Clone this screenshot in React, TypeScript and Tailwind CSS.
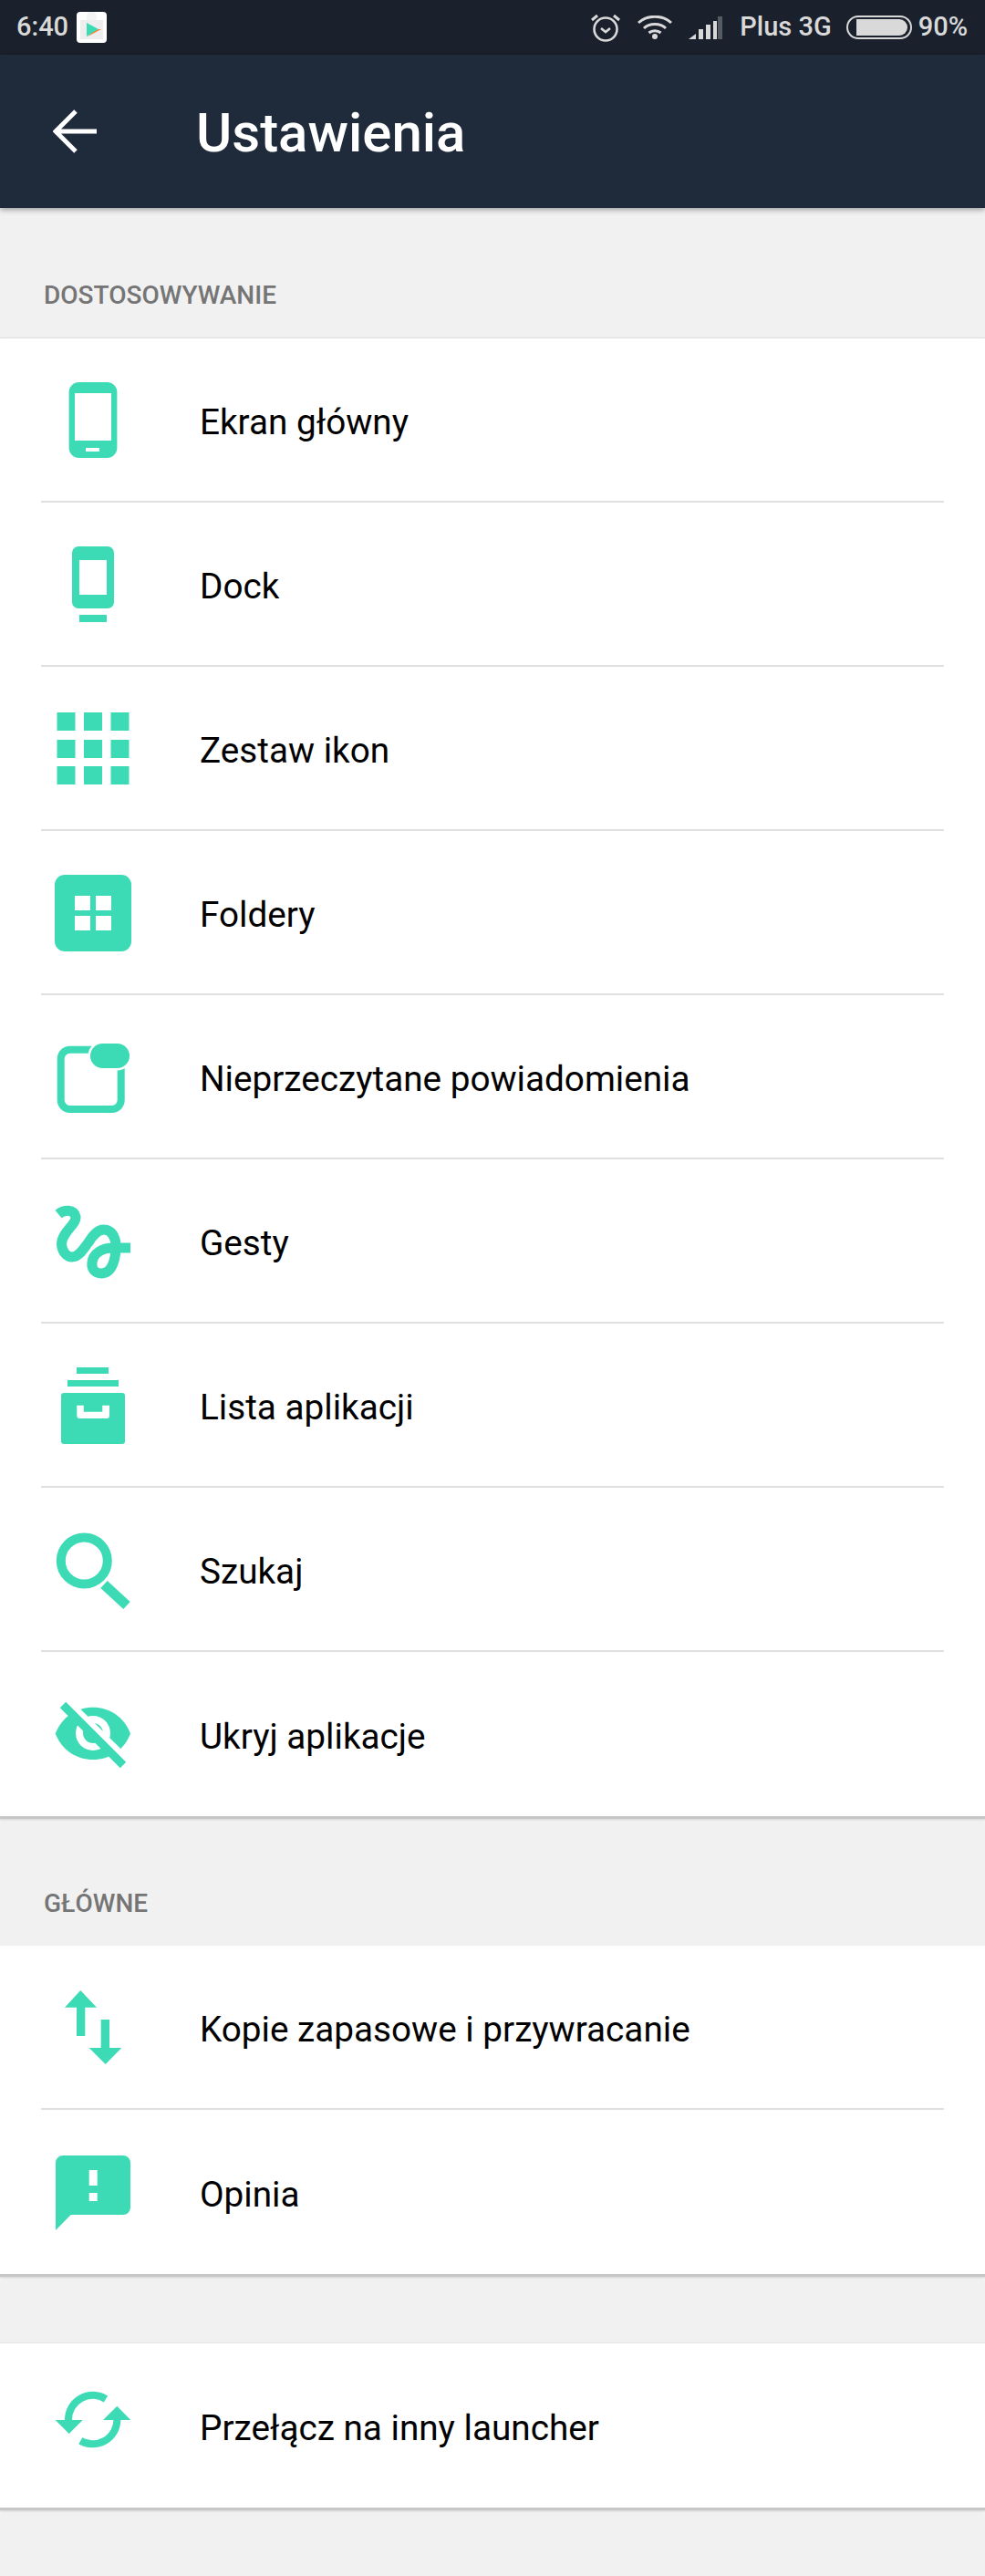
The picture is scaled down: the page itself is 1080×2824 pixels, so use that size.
import type { ReactNode } from "react";

const TEAL = "#3cdbb6";

const Icon = ({ children }: { children: ReactNode }) => (
  <svg width="96" height="96" viewBox="0 0 96 96" className="shrink-0" fill={TEAL}>
    {children}
  </svg>
);

const PhoneIcon = () => (
  <Icon>
    <rect x="21.6" y="7" width="52.8" height="83" rx="11" />
    <rect x="28" y="19" width="40" height="52" fill="#fff" />
    <rect x="40" y="79" width="15" height="4" fill="#fff" />
  </Icon>
);

const DockIcon = () => (
  <Icon>
    <rect x="25" y="7" width="46" height="68" rx="7" />
    <rect x="33" y="22" width="30" height="38" fill="#fff" />
    <rect x="33" y="82" width="30" height="8" />
  </Icon>
);

const GridIcon = () => (
  <Icon>
    {[8.5, 38, 67.5].flatMap((x) =>
      [9, 39, 68].map((y) => <rect key={`${x}-${y}`} x={x} y={y} width="20" height="20" />),
    )}
  </Icon>
);

const FolderIcon = () => (
  <Icon>
    <rect x="6" y="7" width="84" height="84" rx="11" />
    <rect x="28" y="30" width="17" height="16" fill="#fff" />
    <rect x="51" y="30" width="17" height="16" fill="#fff" />
    <rect x="28" y="52" width="17" height="16" fill="#fff" />
    <rect x="51" y="52" width="17" height="16" fill="#fff" />
  </Icon>
);

const BadgeIcon = () => (
  <Icon>
    <rect x="12.7" y="18.7" width="66" height="65.3" rx="10" fill="none" stroke={TEAL} strokeWidth="8" />
    <rect x="45" y="12" width="43" height="27" rx="13.5" stroke="#fff" strokeWidth="5" paintOrder="stroke" />
  </Icon>
);

const GestureIcon = () => (
  <Icon>
    <path
      d="M10 19C16 14 27 13 29 22C30 30 13 40 13.5 52C14 60 19 66 25 66C33 66 38 56 43 50C48 42 53 36 60 36C68 36 73 44 73 54C73 66 70 84 57 84C50 84 46 79 47 72C48 62 58 56 70 56L89 56"
      fill="none"
      stroke={TEAL}
      strokeWidth="11"
    />
  </Icon>
);

const ArchiveIcon = () => (
  <Icon>
    <rect x="30" y="7" width="35" height="7" />
    <rect x="20" y="21" width="56" height="7" />
    <rect x="13" y="35" width="70" height="56" rx="3" />
    <path d="M30.3 48.7H37.7V55.7H58.3V48.7H66V60A3 3 0 0 1 63 63H33.3A3 3 0 0 1 30.3 60Z" fill="#fff" />
  </Icon>
);

const SearchIcon = () => (
  <Icon>
    <circle cx="38.3" cy="39" r="25.5" fill="none" stroke={TEAL} strokeWidth="10" />
    <path d="M60 65L85 88" stroke={TEAL} strokeWidth="11" />
  </Icon>
);

const EyeOffIcon = () => (
  <Icon>
    <path d="M6.7 47.5C14 29 30 18.7 48 18.7C66 18.7 82 29 89 47.5C82 66 66 76 48 76C30 76 14 66 6.7 47.5Z" />
    <circle cx="48" cy="47" r="19" fill="#fff" />
    <circle cx="48" cy="47" r="11" />
    <path d="M18 11L85 77" stroke="#fff" strokeWidth="9" />
    <path d="M15 16L81 82" stroke={TEAL} strokeWidth="9" />
  </Icon>
);

const TransferIcon = () => (
  <Icon>
    <path d="M34.3 8L52 26.7H39.3V58H30V26.7H17Z" />
    <path d="M56.7 40H66V71H79.3L61.7 89L43.7 71H56.7Z" />
  </Icon>
);

const FeedbackIcon = () => (
  <Icon>
    <path d="M15 8H81A8 8 0 0 1 89 16V65A8 8 0 0 1 81 73H23.7L7 90V16A8 8 0 0 1 15 8Z" />
    <rect x="43.7" y="24" width="9" height="17" fill="#fff" />
    <rect x="43.7" y="49" width="9" height="9" fill="#fff" />
  </Icon>
);

const SyncIcon = () => (
  <Icon>
    <path d="M21 45V41.7A26.7 26.7 0 0 1 62 19" fill="none" stroke={TEAL} strokeWidth="8" />
    <path d="M74.4 38V41.7A26.7 26.7 0 0 1 34.3 64.7" fill="none" stroke={TEAL} strokeWidth="8" />
    <path d="M6.7 42H36.7L21.7 57Z" />
    <path d="M59 42H89.3L74.3 26.7Z" />
  </Icon>
);

const Row = ({ icon, label, last }: { icon: ReactNode; label: string; last?: boolean }) => (
  <div className="bg-white px-[45px]">
    <div className={`flex h-[180px] items-center pl-[9px] ${last ? "" : "border-b-2 border-[#e0e0e0]"}`}>
      {icon}
      <span className="ml-[69px] pt-[7px] text-[38.7px] text-black">{label}</span>
    </div>
  </div>
);

const customise = [
  { icon: <PhoneIcon />, label: "Ekran główny" },
  { icon: <DockIcon />, label: "Dock" },
  { icon: <GridIcon />, label: "Zestaw ikon" },
  { icon: <FolderIcon />, label: "Foldery" },
  { icon: <BadgeIcon />, label: "Nieprzeczytane powiadomienia" },
  { icon: <GestureIcon />, label: "Gesty" },
  { icon: <ArchiveIcon />, label: "Lista aplikacji" },
  { icon: <SearchIcon />, label: "Szukaj" },
  { icon: <EyeOffIcon />, label: "Ukryj aplikacje" },
];

const StatusBar = () => (
  <div className="flex h-[60px] items-center bg-[#1a212c] pl-[18px] pr-[19px] text-[29px] font-medium text-[#d9d9d9]">
    <span>6:40</span>
    <svg width="33" height="34" viewBox="0 0 33 34" className="ml-[9px]">
      <rect width="33" height="34" rx="4" fill="#fff" />
      <path d="M4 9H29V30H4Z" fill="#eeeeee" />
      <path d="M11 5A5 5 0 0 1 22 5V9H11Z" fill="#f4f4f4" />
      <path d="M11 12L24 19L11 27Z" fill={TEAL} />
      <path d="M17 23L24 19L27 19L12 27Z" fill="#f47a2c" />
    </svg>
    <svg width="32" height="32" viewBox="0 0 32 32" className="ml-auto" fill="none" stroke="#d9d9d9" strokeWidth="2.6">
      <circle cx="16" cy="18" r="12.5" />
      <path d="M11 17L16 21L21 17" />
      <path d="M1 8L7 3M31 8L25 3" strokeWidth="3" />
    </svg>
    <svg width="38" height="26" viewBox="0 0 38 26" className="ml-[19px]" fill="none" stroke="#d9d9d9" strokeWidth="3">
      <path d="M1 8C11 -1 27 -1 37 8" />
      <path d="M7 14C13 8 25 8 31 14" />
      <path d="M12.5 19C16 16 22 16 25.5 19" />
      <circle cx="19" cy="23" r="3" fill="#d9d9d9" stroke="none" />
    </svg>
    <svg width="37" height="25" viewBox="0 0 37 25" className="ml-[18px]" fill="#d9d9d9">
      <path d="M0 25L8 19V25Z" />
      <rect x="11" y="14" width="5" height="11" />
      <rect x="19" y="9" width="5" height="16" />
      <rect x="27" y="5" width="4" height="20" />
      <rect x="32" y="0" width="5" height="25" fill="#555b63" />
    </svg>
    <span className="ml-[19px]">Plus 3G</span>
    <svg width="72" height="26" viewBox="0 0 72 26" className="ml-[16px]">
      <rect x="1" y="1" width="70" height="24" rx="12" fill="none" stroke="#d9d9d9" strokeWidth="2" />
      <path d="M11 4H58A9 9 0 0 1 58 22H11Z" fill="#d9d9d9" />
    </svg>
    <span className="ml-[7px]">90%</span>
  </div>
);

const SectionLabel = ({ children }: { children: string }) => (
  <div className="h-[67px] pl-[48px] text-[28px] font-medium text-[#757575]">{children}</div>
);

export default function App() {
  return (
    <div className="flex min-h-[2824px] flex-col bg-[#f1f1f1] font-['Roboto',sans-serif]">
      <StatusBar />
      <header className="relative flex h-[168px] items-center bg-[#1f2b3a] shadow-[0_2px_6px_rgba(0,0,0,0.35)]">
        <svg width="48" height="48" viewBox="0 0 48 48" className="ml-[58px]" fill="none" stroke="#fff" strokeWidth="5">
          <path d="M48 24H3M25 2L3 24L25 46" />
        </svg>
        <h1 className="ml-[109px] pt-[3px] text-[60px] font-medium text-white">Ustawienia</h1>
      </header>

      <section className="mt-[75px]">
        <SectionLabel>DOSTOSOWYWANIE</SectionLabel>
        <div className="border-y border-t-[#dedede] border-b-[3px] border-b-[#c6c6c6] shadow-[0_1px_2px_rgba(0,0,0,0.12)]">
          {customise.map((item, i) => (
            <Row key={item.label} icon={item.icon} label={item.label} last={i === customise.length - 1} />
          ))}
        </div>
      </section>

      <section className="mt-[72px]">
        <SectionLabel>GŁÓWNE</SectionLabel>
        <div className="border-b-[3px] border-b-[#c6c6c6] shadow-[0_1px_2px_rgba(0,0,0,0.12)]">
          <Row icon={<TransferIcon />} label="Kopie zapasowe i przywracanie" />
          <Row icon={<FeedbackIcon />} label="Opinia" last />
        </div>
      </section>

      <section className="mt-[72px] border-y border-t-[#e4e4e4] border-b-[3px] border-b-[#c6c6c6] shadow-[0_1px_2px_rgba(0,0,0,0.12)]">
        <Row icon={<SyncIcon />} label="Przełącz na inny launcher" last />
      </section>
    </div>
  );
}
